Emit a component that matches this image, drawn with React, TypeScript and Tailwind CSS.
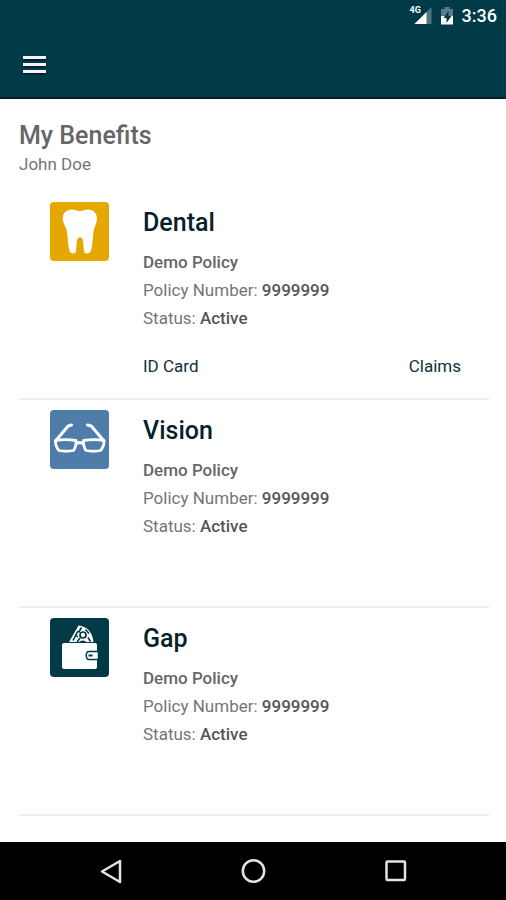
import type { ReactNode } from 'react';

type Benefit = {
  name: string;
  policy: string;
  number: string;
  status: string;
  color: string;
  icon: ReactNode;
  links: string[];
};

const ToothIcon = () => (
  <svg viewBox="0 0 59 59" className="h-full w-full" aria-hidden="true">
    <path
      d="M22 7.500c3.200 0 5 1.500 8 1.500s4.500-1.500 8-1.500c5.500 0 9 4 9 9 0 4.500-2.500 8-3.300 12-1.200 6-.6 13-2.700 20-.7 2-2 3-4.200 3-2 0-2.700-1.300-3-3.500-.4-4-.2-7.500-1.100-10.300-.5-1.600-1.300-2.500-2.700-2.500s-2.300 1-2.800 2.700c-.8 3-.6 6.500-1.100 10.300-.3 2.200-1.100 3.300-3 3.300-1.800 0-2.800-1-3.500-2.800-2.200-6.500-1.500-14-2.800-20.200-.9-4-4-7.500-4-12 0-5.500 3.700-9 9.200-9z"
      fill="#fff"
    />
  </svg>
);

const GlassesIcon = () => (
  <svg viewBox="0 0 59 59" className="h-full w-full" fill="none" stroke="#fff" strokeLinejoin="round" aria-hidden="true">
    <path d="M21.500 15l-3.300 1L5.500 31M37.500 15l3.800 1L54 31" strokeWidth="3" strokeLinecap="round" />
    <path
      d="M5.500 30.500c6-1 14-1 20.500 0 .3 3.500-.4 7-2.500 10-5 1-10 1-14.500 0-2.500-2.800-3.700-6-3.500-10zM54 30.500c-6-1-14-1-20.500 0-.3 3.500.4 7 2.500 10 5 1 10 1 14.500 0 2.500-2.800 3.700-6 3.500-10z"
      strokeWidth="2.800"
    />
    <path d="M26 33.500c2-1 5.500-1 7.500 0" strokeWidth="3.200" />
  </svg>
);

const WalletIcon = () => (
  <svg viewBox="0 0 59 59" className="h-full w-full" aria-hidden="true">
    <path d="M19 24L28.500 7.500q6 .5 10 4.500t5 12z" fill="#fff" />
    <path
      d="M23 22.500l5-9.500M27 24l3-4M31.500 9.500l-3 5M35.500 11.500l3.500 4M38 19.500l2.500 4M25 16.500l3 2.500"
      fill="none"
      stroke="#003a47"
      strokeWidth="1.600"
    />
    <circle cx="33" cy="17" r="3" fill="#fff" stroke="#003a47" strokeWidth="1.700" />
    <path d="M28.500 25c1-3.500 7.500-3.500 8.500 0" fill="#003a47" />
    <rect x="12" y="25" width="35" height="26" rx="2" fill="#fff" />
    <path d="M48.500 33.500H39q-2.700 0-2.700 4t2.700 4h9.500z" fill="#fff" stroke="#003a47" strokeWidth="1.500" />
    <path d="M38.500 37.500h4" stroke="#003a47" strokeWidth="1.800" />
  </svg>
);

const benefits: Benefit[] = [
  {
    name: 'Dental',
    policy: 'Demo Policy',
    number: '9999999',
    status: 'Active',
    color: 'bg-[#e5a800]',
    icon: <ToothIcon />,
    links: ['ID Card', 'Claims'],
  },
  {
    name: 'Vision',
    policy: 'Demo Policy',
    number: '9999999',
    status: 'Active',
    color: 'bg-[#4d7da8]',
    icon: <GlassesIcon />,
    links: [],
  },
  {
    name: 'Gap',
    policy: 'Demo Policy',
    number: '9999999',
    status: 'Active',
    color: 'bg-[#003a47]',
    icon: <WalletIcon />,
    links: [],
  },
];

const StatusBar = () => (
  <div className="flex h-8 items-center justify-end pr-[9px] text-white">
    <div className="relative mr-2 h-5 w-6">
      <svg viewBox="0 0 24 20" className="h-full w-full" aria-hidden="true">
        <path d="M23.500 1v17h-17z" fill="#fff" fillOpacity=".3" />
        <path d="M18.500 6v12h-12z" fill="#fff" />
      </svg>
      <span className="absolute top-0 left-0.5 bg-[#003a47] text-[9px] leading-[8px] font-bold">4G</span>
    </div>
    <svg viewBox="0 0 14 20" className="mr-2 h-5 w-[14px]" aria-hidden="true">
      <path d="M4.500 1h5v2H13v7H1V3h3.500z" fill="#fff" fillOpacity=".35" />
      <path d="M1 10h12v8.500H1z" fill="#fff" />
      <path d="M8.500 5l-5 7h3v5l5-7h-3z" fill="#003a47" />
    </svg>
    <span className="text-lg font-medium">3:36</span>
  </div>
);

const BenefitRow = ({ benefit }: { benefit: Benefit }) => (
  <li className="flex min-h-52 border-b-2 border-[#eeeeee] pt-[10px] pr-7 pb-[18px] pl-[31px]">
    <div className={`h-[59px] w-[59px] shrink-0 overflow-hidden rounded-[4px] ${benefit.color}`}>{benefit.icon}</div>

    <div className="ml-[34px] flex-1 pt-[7px] text-[17px] leading-7 text-[#757575]">
      <h2 className="mb-[11px] text-[25px] leading-7 font-medium text-[#061f2b]">{benefit.name}</h2>
      <p className="font-medium text-[#666666]">{benefit.policy}</p>
      <p>
        Policy Number: <span className="font-medium text-[#555555]">{benefit.number}</span>
      </p>
      <p>
        Status: <span className="font-medium text-[#555555]">{benefit.status}</span>
      </p>

      {benefit.links.length > 0 && (
        <div className="mt-5 flex justify-between text-[#12303c]">
          {benefit.links.map((link) => (
            <a key={link} href="#">
              {link}
            </a>
          ))}
        </div>
      )}
    </div>
  </li>
);

const NavBar = () => (
  <nav className="grid h-[58px] grid-cols-3 bg-black px-10">
    <button type="button" aria-label="Back" className="flex items-center justify-center">
      <svg viewBox="0 0 26 26" className="h-[26px] w-[26px]" fill="none" stroke="#e4e4e4" strokeWidth="2.500" aria-hidden="true">
        <path d="M22 3v21L4 13.500z" strokeLinejoin="round" />
      </svg>
    </button>
    <button type="button" aria-label="Home" className="flex items-center justify-center">
      <svg viewBox="0 0 26 26" className="h-[26px] w-[26px]" fill="none" stroke="#e4e4e4" strokeWidth="2.500" aria-hidden="true">
        <circle cx="13.500" cy="13" r="10.700" />
      </svg>
    </button>
    <button type="button" aria-label="Recent apps" className="flex items-center justify-center">
      <svg viewBox="0 0 26 26" className="h-[26px] w-[26px]" fill="none" stroke="#e4e4e4" strokeWidth="2.500" aria-hidden="true">
        <rect x="4.500" y="3.500" width="18.500" height="18.500" rx="1" />
      </svg>
    </button>
  </nav>
);

export default function App() {
  return (
    <div className="flex min-h-screen flex-col bg-white font-['Roboto',sans-serif]">
      <header className="border-b-2 border-[#0b1a22] bg-[#003a47]">
        <StatusBar />
        <div className="flex h-[65px] items-center px-[22px]">
          <button type="button" aria-label="Menu">
            <svg viewBox="0 0 25 20" className="h-5 w-[25px]" aria-hidden="true">
              <path d="M1 4.500h23M1 11.500h23M1 18.500h23" stroke="#031c2b" strokeWidth="2" />
              <path d="M1 2.500h23M1 9.500h23M1 16.500h23" stroke="#f3f3f8" strokeWidth="3" />
            </svg>
          </button>
        </div>
      </header>

      <main className="flex-1 pt-[21px] pr-[17px] pl-[19px]">
        <h1 className="text-[25px] leading-8 font-medium text-[#666666]">My Benefits</h1>
        <p className="mb-4 text-[17px] leading-6 text-[#757575]">John Doe</p>
        <ul>
          {benefits.map((benefit) => (
            <BenefitRow key={benefit.name} benefit={benefit} />
          ))}
        </ul>
      </main>

      <NavBar />
    </div>
  );
}
